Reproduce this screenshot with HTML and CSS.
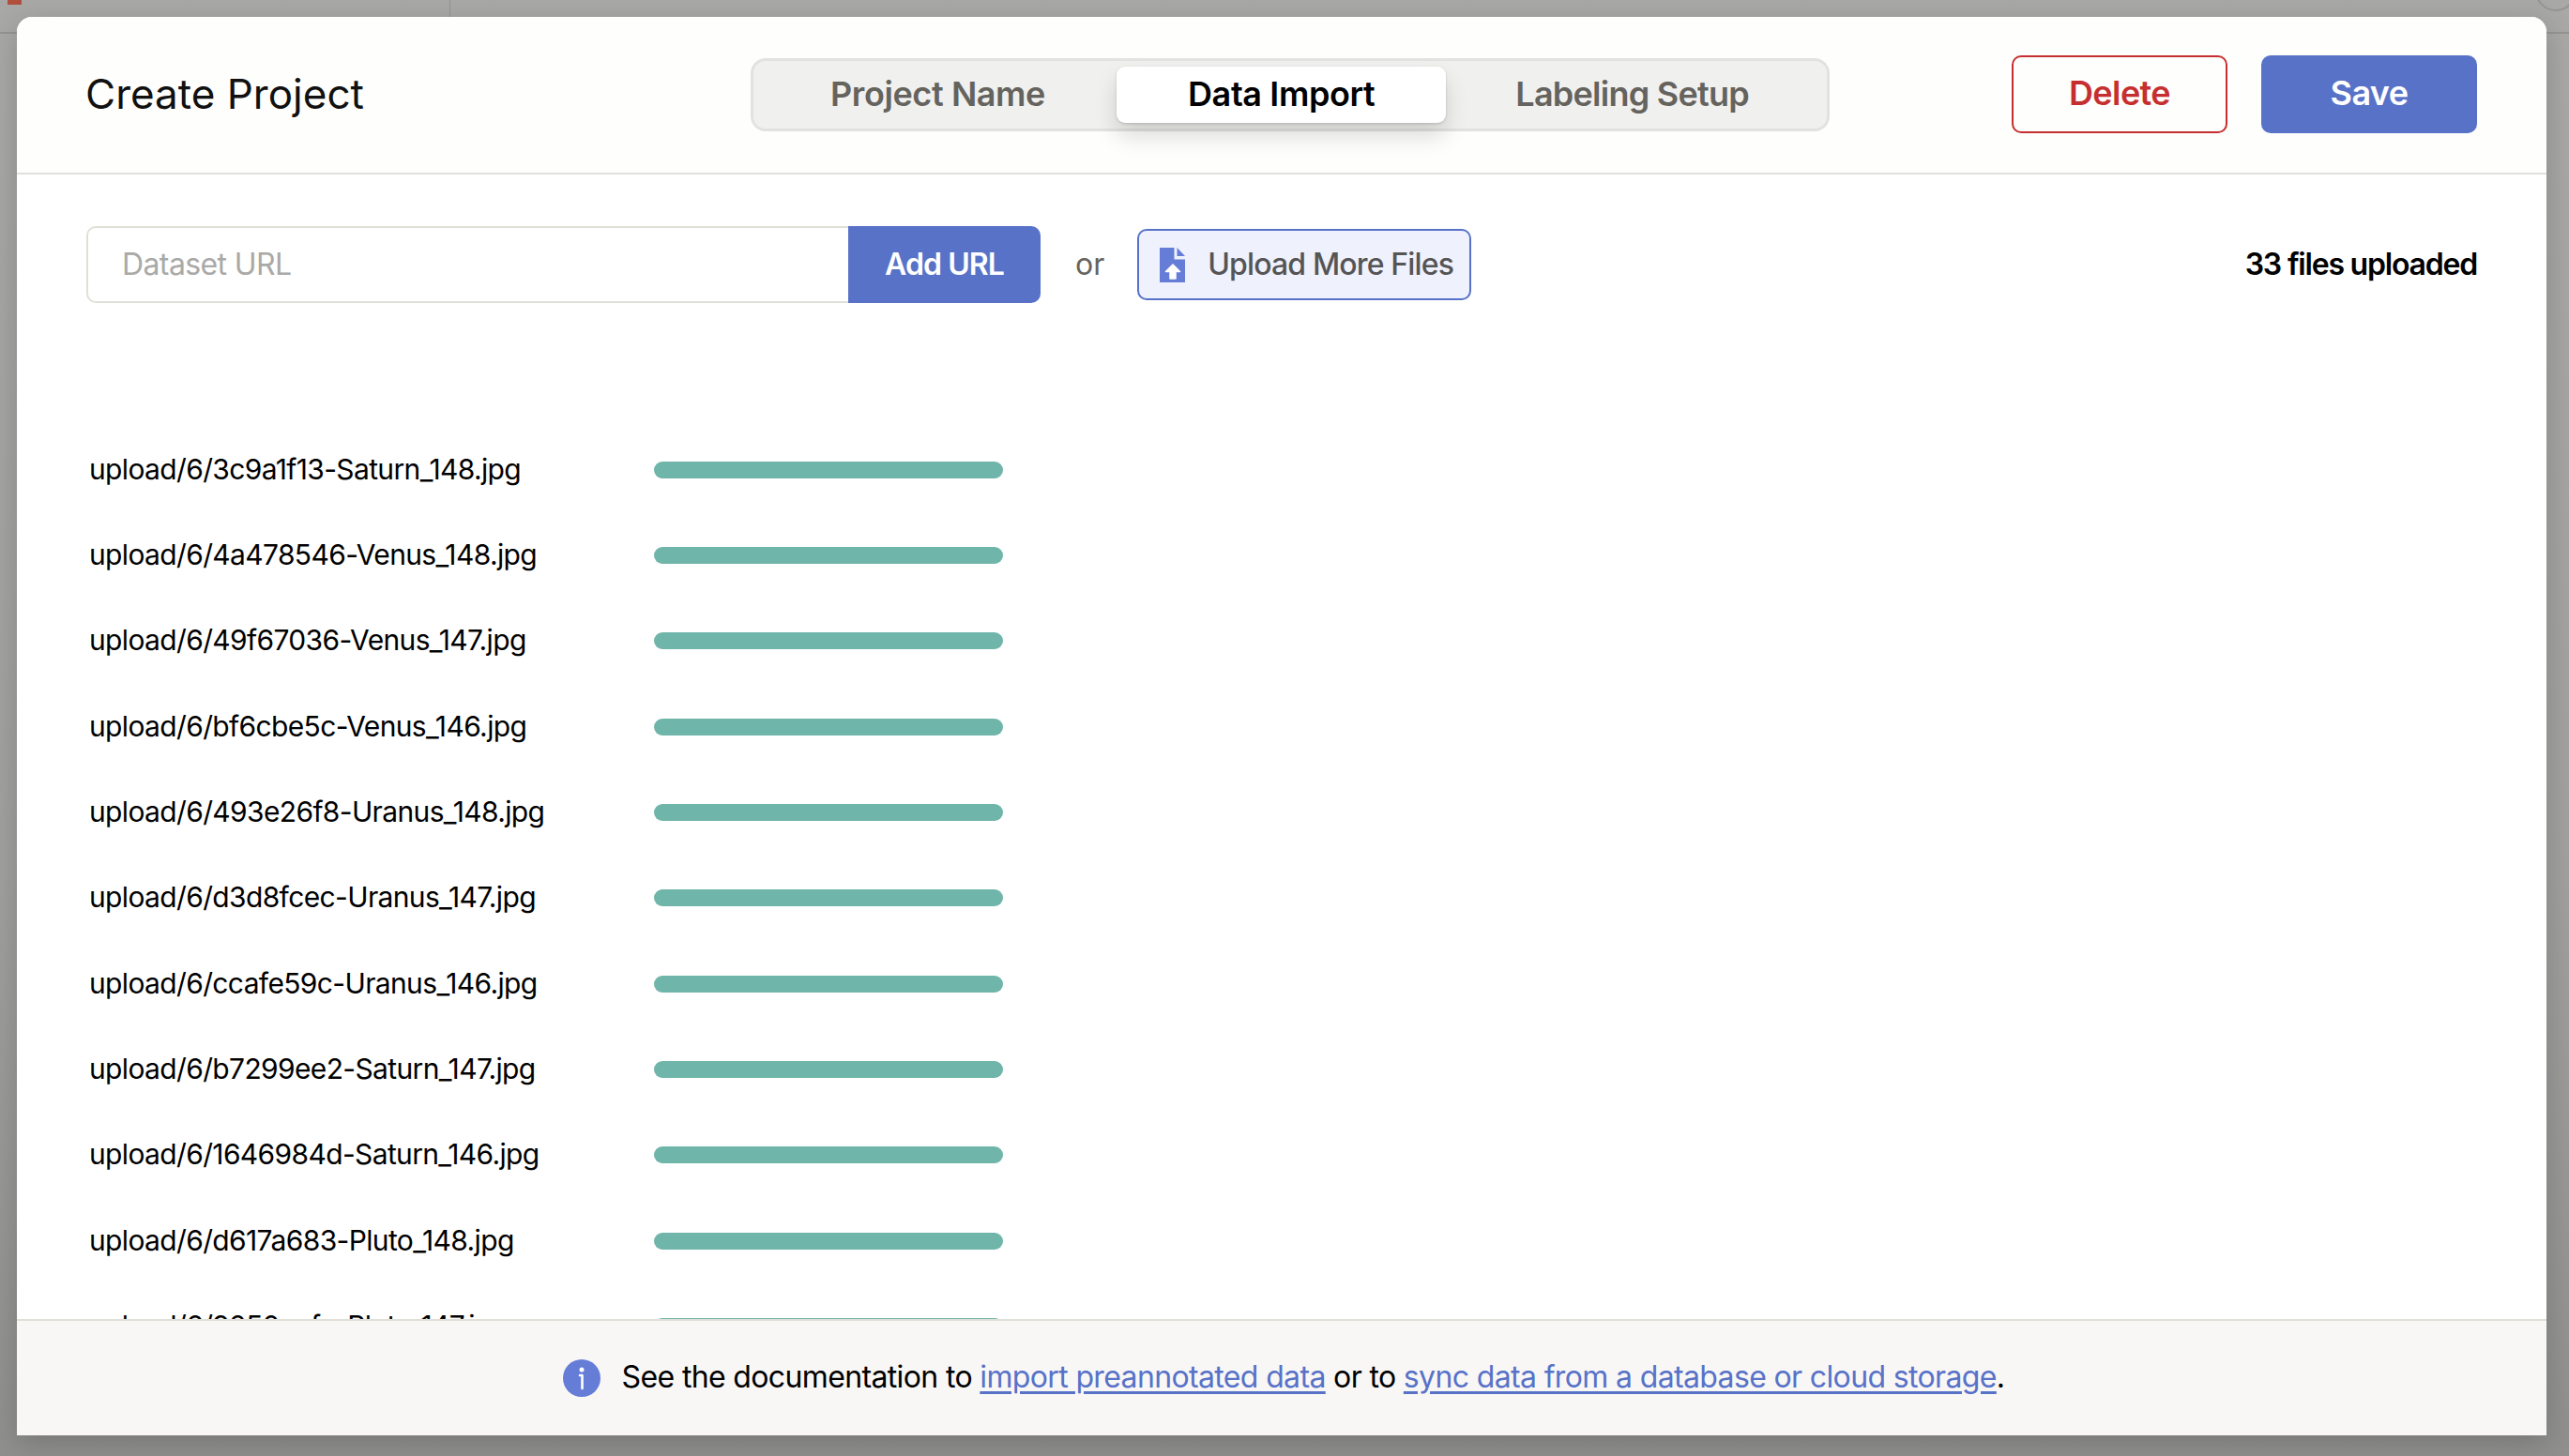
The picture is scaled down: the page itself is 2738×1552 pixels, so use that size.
FILE: index.html
```html
<!DOCTYPE html>
<html lang="en">
<head>
    <meta charset="UTF-8">
    <title>Create Project</title>
    <link rel="stylesheet" href="styles.css">
</head>
<body>
    <!-- page behind the dimmed overlay -->
    <div class="behind-tag"></div>
    <div class="behind-line-v"></div>
    <div class="behind-line-h"></div>
    <div class="behind-circle"></div>

    <div class="modal">
        <header class="modal-header">
            <h1 class="title">Create Project</h1>
            <nav class="tabs">
                <div class="tab">Project Name</div>
                <div class="tab tab-active">Data Import</div>
                <div class="tab">Labeling Setup</div>
            </nav>
            <div class="actions">
                <button class="btn btn-delete">Delete</button>
                <button class="btn btn-save">Save</button>
            </div>
        </header>

        <main class="modal-body">
            <div class="toolbar">
                <div class="url-group">
                    <input class="url-input" type="text" placeholder="Dataset URL">
                    <button class="url-add">Add URL</button>
                </div>
                <span class="or">or</span>
                <button class="upload-btn">
                    <svg class="upload-icon" viewBox="0 0 27 37" width="27" height="37">
                        <path fill="#667dd8" d="M0 0H15.500V12.500H27V37H0Z"/>
                        <path fill="#667dd8" d="M18.500 0L27 9H18.500Z"/>
                        <path fill="#fff" stroke="#fff" stroke-width="1.500" stroke-linejoin="round" d="M14 18L21.500 25.500H17V33H11V25.500H6.500Z"/>
                    </svg>
                    <span>Upload More Files</span>
                </button>
                <span class="file-count">33 files uploaded</span>
            </div>

            <div class="file-list">
                <div class="file-row"><span class="file-name">upload/6/3c9a1f13-Saturn_148.jpg</span><div class="bar"></div></div>
                <div class="file-row"><span class="file-name">upload/6/4a478546-Venus_148.jpg</span><div class="bar"></div></div>
                <div class="file-row"><span class="file-name">upload/6/49f67036-Venus_147.jpg</span><div class="bar"></div></div>
                <div class="file-row"><span class="file-name">upload/6/bf6cbe5c-Venus_146.jpg</span><div class="bar"></div></div>
                <div class="file-row"><span class="file-name">upload/6/493e26f8-Uranus_148.jpg</span><div class="bar"></div></div>
                <div class="file-row"><span class="file-name">upload/6/d3d8fcec-Uranus_147.jpg</span><div class="bar"></div></div>
                <div class="file-row"><span class="file-name">upload/6/ccafe59c-Uranus_146.jpg</span><div class="bar"></div></div>
                <div class="file-row"><span class="file-name">upload/6/b7299ee2-Saturn_147.jpg</span><div class="bar"></div></div>
                <div class="file-row"><span class="file-name">upload/6/1646984d-Saturn_146.jpg</span><div class="bar"></div></div>
                <div class="file-row"><span class="file-name">upload/6/d617a683-Pluto_148.jpg</span><div class="bar"></div></div>
                <div class="file-row"><span class="file-name">upload/6/9250aefc-Pluto_147.jpg</span><div class="bar"></div></div>
            </div>
        </main>

        <footer class="modal-footer">
            <svg class="info-icon" viewBox="0 0 40 40" width="40" height="40">
                <circle cx="20" cy="20" r="20" fill="#667dd8"/>
                <circle cx="20" cy="11" r="2.500" fill="#fff"/>
                <path d="M18 17H20.500V31" fill="none" stroke="#fff" stroke-width="2.600" stroke-linecap="round" stroke-linejoin="round"/>
            </svg>
            <span class="footer-text">See the documentation to <a href="#">import preannotated data</a> or to <a href="#">sync data from a database or cloud storage</a>.</span>
        </footer>
    </div>
</body>
</html>
```

FILE: styles.css
```css
* { box-sizing: border-box; }
html, body { height: 100%; }
body { margin: 0; padding: 18px 24px 22px 18px; overflow: hidden; font-family: Inter, "Liberation Sans", sans-serif; color: #000; background: linear-gradient(180deg, #a8a8a6 0%, #a0a09f 60%, #8f8f8e 100%); position: relative; }

.behind-tag { position: absolute; left: 8px; top: 0; width: 15px; height: 5px; background: #b0503c; }
.behind-line-v { position: absolute; left: 479px; top: 0; width: 1px; height: 18px; background: #949493; }
.behind-line-h { position: absolute; left: 0; right: 0; top: 34px; height: 2px; background: #949490; }
.behind-circle { position: absolute; right: -8px; top: -32px; width: 44px; height: 44px; border: 2px solid #959594; border-radius: 50%; }

.modal { position: relative; height: 100%; display: flex; flex-direction: column; background: #fff; border-radius: 16px 16px 0 0; overflow: hidden; box-shadow: 0 8px 30px rgba(0,0,0,0.18); }

.modal-header { height: 168px; flex: none; display: flex; align-items: center; padding: 0 74px; background: #fefefc; border-bottom: 2px solid #e1e0d8; }
.title { width: 709px; flex: none; margin: -3px 0 0 -1px; font-size: 44px; font-weight: 400; letter-spacing: 0; color: #111; }

.tabs { display: flex; height: 78px; padding: 6px 5px; background: #f0f0ef; border: 3px solid #e2e2df; border-radius: 16px; }
.tab { padding: 0 76px 3px; display: flex; align-items: center; font-size: 36px; font-weight: 600; letter-spacing: -0.4px; color: #65635d; white-space: nowrap; }
.tab:first-child { padding-left: 77px; }
.tab:last-child { padding-left: 74px; padding-right: 78px; letter-spacing: -0.75px; }
.tab-active { background: #fff; color: #000; border-radius: 9px; box-shadow: 0 1px 3px rgba(0,0,0,0.16), 0 14px 24px rgba(0,0,0,0.14); }

.actions { margin-left: auto; margin-top: -1px; display: flex; gap: 36px; }
.btn { width: 230px; height: 83px; padding: 0 0 3px; border-radius: 10px; font-family: inherit; font-size: 36px; font-weight: 600; letter-spacing: -0.6px; }
.btn-delete { background: transparent; border: 2px solid #c62f2f; color: #c62f2f; }
.btn-save { background: #5872c8; border: none; color: #fff; }

.modal-body { flex: 1; min-height: 0; overflow: hidden; }

.toolbar { display: flex; align-items: center; padding: 55px 74px 0; height: 137px; }
.url-group { display: flex; width: 1017px; height: 82px; flex: none; }
.url-input { flex: 1; min-width: 0; height: 100%; padding: 0 36px 1px; border: 2px solid #e1e0d8; border-right: none; border-radius: 10px 0 0 10px; outline: none; font-family: inherit; font-size: 32px; letter-spacing: -0.6px; color: #000; }
.url-input::placeholder { color: #a9a9a7; opacity: 1; }
.url-add { width: 205px; flex: none; padding: 0 0 1px; background: #5872c8; color: #fff; border: none; border-radius: 0 10px 10px 0; font-family: inherit; font-size: 32px; font-weight: 600; letter-spacing: -0.9px; }
.or { margin-left: 37px; padding-bottom: 1px; font-size: 32px; color: #66645e; }
.upload-btn { margin-left: 35px; width: 356px; height: 76px; display: flex; align-items: center; gap: 24px; padding: 0 0 0 22px; background: #eff1fd; border: 2px solid #5872c8; border-radius: 10px; font-family: inherit; font-size: 32px; font-weight: 500; letter-spacing: -0.85px; color: #555; white-space: nowrap; }
.upload-btn span { padding-bottom: 1px; }
.upload-icon { flex: none; }
.file-count { margin-left: auto; padding-bottom: 1px; font-size: 32px; font-weight: 600; letter-spacing: -1.2px; }

.file-list { padding: 132px 0 0 77px; }
.file-row { display: flex; align-items: center; height: 91.33px; }
.file-name { width: 602px; flex: none; padding-bottom: 2px; font-size: 30px; letter-spacing: -0.64px; }
.bar { width: 372px; height: 18px; border-radius: 9px; background: #70b5aa; }

.modal-footer { height: 124px; flex: none; display: flex; align-items: center; justify-content: center; gap: 23px; padding-left: 4px; background: #f8f7f6; border-top: 2px solid #e1e0d8; font-size: 32px; letter-spacing: -0.64px; }
.footer-text { padding-bottom: 3px; }
.info-icon { flex: none; }
.modal-footer a { color: #5872c8; text-decoration: underline; text-underline-offset: 4px; }
```
